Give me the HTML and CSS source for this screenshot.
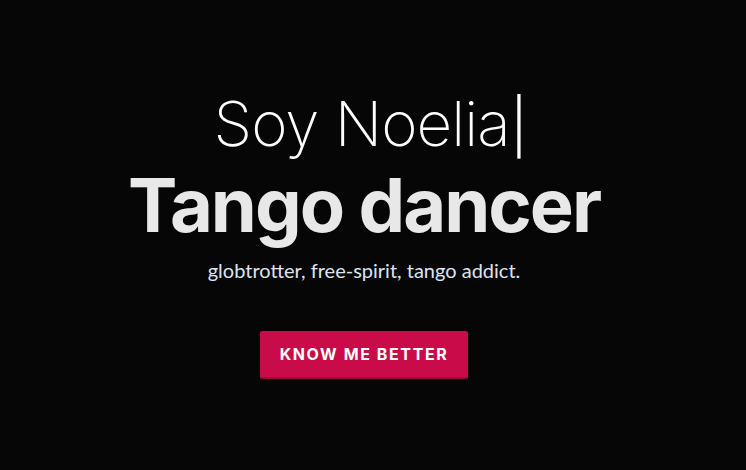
FILE: index.html
```html
<!DOCTYPE html>
<html>
<head>
<meta charset="utf-8">
<link rel="stylesheet" href="styles.css">
</head>
<body>
<section class="hero">
  <h2 class="intro">Soy Noelia<span class="cursor">|</span></h2>
  <h1 class="title">Tango dancer</h1>
  <p class="tagline">globtrotter, free-spirit, tango addict.</p>
  <a class="btn" href="#">KNOW ME BETTER</a>
</section>
</body>
</html>
```
FILE: styles.css
```css
html, body {
  margin: 0;
  padding: 0;
  background: #060606;
  height: 100%;
}
.hero {
  height: 470px;
  display: flex;
  flex-direction: column;
  align-items: center;
  box-sizing: border-box;
  padding-top: 88px;
  padding-right: 18px;
}
.intro {
  margin: 0;
  font-family: Inter, "Noto Sans", sans-serif;
  font-weight: 200;
  font-size: 62px;
  line-height: 72px;
  color: #ffffff;
  letter-spacing: -1px;
  margin-left: 12px;
}
.cursor {
  font-weight: 300;
  font-size: 54px;
  margin-left: 1px;
}
.title {
  margin: 2px 0 0 0;
  font-family: Inter, "Noto Sans", sans-serif;
  font-weight: 700;
  font-size: 74px;
  line-height: 80px;
  color: #e8e8e8;
  letter-spacing: -2px;
}
.tagline {
  margin: 12px 0 0 0;
  font-family: Lato, sans-serif;
  font-size: 20px;
  line-height: 26px;
  color: #dde4ee;
}
.btn {
  margin-top: 48px;
  width: 208px;
  height: 48px;
  box-sizing: border-box;
  background: #c90b4a;
  border-bottom: 2px solid #9c0a3a;
  border-radius: 2px;
  display: flex;
  align-items: center;
  justify-content: center;
  font-family: Inter, sans-serif;
  font-weight: 700;
  font-size: 16px;
  letter-spacing: 1.6px;
  color: #ffffff;
  text-decoration: none;
}
```
